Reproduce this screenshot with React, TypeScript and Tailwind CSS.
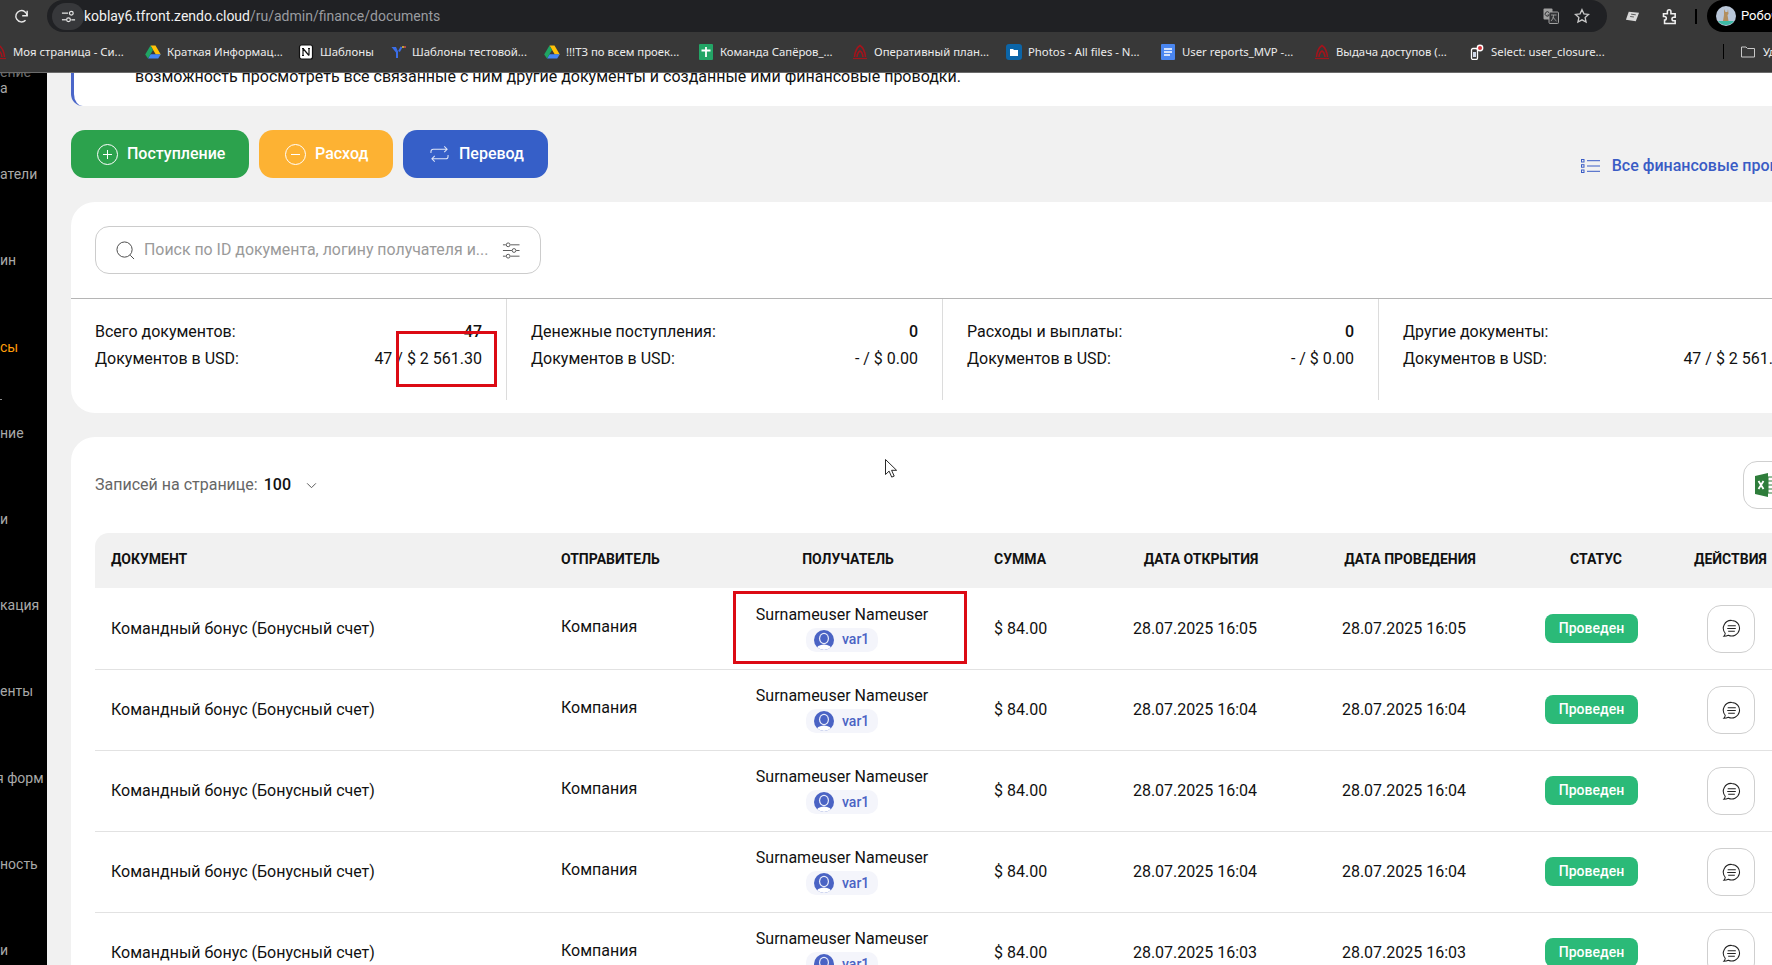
import React from "react";

const Drive = () => (
  <svg viewBox="0 0 16 16" className="h-4 w-4 shrink-0">
    <path d="M5.5 1.5h5l5.3 9h-5z" fill="#ffc107" />
    <path d="M3 14.5l2.6-4.3h10.2l-2.6 4.3z" fill="#4285f4" />
    <path d="M5.5 1.5L0.2 10.4 3 14.5 8 6z" fill="#1fa463" />
  </svg>
);
const Tower = () => (
  <svg viewBox="0 0 16 16" className="h-4 w-4 shrink-0" fill="none" stroke="#a3141c" strokeWidth="1.6">
    <path d="M2.5 13C3 7 5 3.5 8 1.5 11 3.5 13 7 13.5 13" />
    <path d="M5 13c.3-3 1.2-5 3-6 1.8 1 2.7 3 3 6" />
    <path d="M1 14.5h14" strokeWidth="1.2" />
  </svg>
);
const Notion = () => (
  <svg viewBox="0 0 16 16" className="h-4 w-4 shrink-0">
    <rect x="1.5" y="1" width="13" height="14" rx="2" fill="#fff" stroke="#111" strokeWidth="1.2" />
    <path d="M5 4.5v7M5 4.5l6 7M11 4.5v7M4 4.5h2M10 4.5h2M4 11.5h2" stroke="#111" strokeWidth="1.2" fill="none" />
  </svg>
);
const YIcon = () => (
  <svg viewBox="0 0 16 16" className="h-4 w-4 shrink-0">
    <path d="M1.5 3l4.5 5.5V14h2V7.5L6 3z" fill="#3b6ee8" />
    <path d="M9 7.5L11.5 3" stroke="#3b6ee8" strokeWidth="2" />
    <circle cx="13" cy="3" r="1" fill="#e8c43b" />
    <circle cx="15" cy="3" r="1" fill="#d94b4b" />
  </svg>
);
const Sheets = () => (
  <svg viewBox="0 0 16 16" className="h-4 w-4 shrink-0">
    <rect x="1" y="0" width="14" height="16" rx="1" fill="#23a566" />
    <path d="M3.5 6.5h9M8 3v10" stroke="#fff" strokeWidth="1.8" />
  </svg>
);
const Photos = () => (
  <svg viewBox="0 0 16 16" className="h-4 w-4 shrink-0">
    <rect x="0" y="0" width="16" height="16" rx="3" fill="#0b65a8" />
    <path d="M4 5h3l1 1h4v6H4z" fill="#fff" />
  </svg>
);
const Docs = () => (
  <svg viewBox="0 0 16 16" className="h-4 w-4 shrink-0">
    <rect x="1" y="0" width="14" height="16" rx="1" fill="#4a86f0" />
    <path d="M4 5h8M4 8h8M4 11h6" stroke="#fff" strokeWidth="1.5" />
  </svg>
);
const DbIcon = () => (
  <svg viewBox="0 0 16 16" className="h-4 w-4 shrink-0">
    <rect x="2.5" y="4.5" width="6" height="11" rx="1.5" fill="none" stroke="#fff" strokeWidth="1.3" />
    <rect x="4" y="8" width="3" height="5" fill="#cfd8e8" />
    <circle cx="11" cy="4" r="3.4" fill="#fff" />
    <circle cx="11" cy="4" r="2" fill="#d2343a" />
  </svg>
);

const bookmarks: { w: string; text: string; icon: React.ReactNode }[] = [
  { w: "w-[154px]", text: "Моя страница - Си...", icon: <Tower /> },
  { w: "w-[153px]", text: "Краткая Информац...", icon: <Drive /> },
  { w: "w-[92px]", text: "Шаблоны", icon: <Notion /> },
  { w: "w-[154px]", text: "Шаблоны тестовой...", icon: <YIcon /> },
  { w: "w-[154px]", text: "!!!ТЗ по всем проек...", icon: <Drive /> },
  { w: "w-[154px]", text: "Команда Сапёров_...", icon: <Sheets /> },
  { w: "w-[154px]", text: "Оперативный план...", icon: <Tower /> },
  { w: "w-[154px]", text: "Photos - All files - N...", icon: <Photos /> },
  { w: "w-[154px]", text: "User reports_MVP -...", icon: <Docs /> },
  { w: "w-[155px]", text: "Выдача доступов (...", icon: <Tower /> },
  { w: "w-[254px]", text: "Select: user_closure...", icon: <DbIcon /> },
];

const Chrome = () => (
  <div className="h-[73px] shrink-0 border-b border-[#6b6b6b] bg-[#383838] font-['Noto_Sans',sans-serif] text-white">
    <div className="flex h-8 items-center">
      <div className="flex w-[47px] justify-center pr-[5px]">
        <svg viewBox="0 0 24 24" className="h-[17px] w-[17px]" fill="none" stroke="#e8e8e8" strokeWidth="2">
          <path d="M20 11a8 8 0 1 0-2.3 6.3" />
          <path d="M20 4v7h-7" />
        </svg>
      </div>
      <div className="flex h-8 w-[1560px] items-center rounded-full bg-[#202124]">
        <div className="ml-[5px] flex h-[27px] w-[32px] items-center justify-center rounded-full bg-[#37383b]">
          <svg viewBox="0 0 16 16" className="h-[15px] w-[15px]" fill="none" stroke="#e6e6e6" strokeWidth="1.3">
            <path d="M1 4.5h6.5M11 11.5h4" />
            <circle cx="11" cy="4.5" r="2" />
            <path d="M1 11.5h4.5" />
            <circle cx="8" cy="11.5" r="2" />
          </svg>
        </div>
        <div className="whitespace-nowrap font-['Roboto',sans-serif] text-[14px]">
          <span className="text-[#f1f1f1]">koblay6.tfront.zendo.cloud</span>
          <span className="text-[#9a9ca0]">/ru/admin/finance/documents</span>
        </div>
        <div className="ml-auto mr-[17px] flex items-center gap-[15px]">
          <svg viewBox="0 0 16 16" className="h-4 w-4">
            <rect x="0.5" y="0.5" width="9" height="11" rx="1" fill="#a0a0a0" />
            <rect x="6" y="4" width="9.5" height="11.5" rx="1" fill="#303134" stroke="#a0a0a0" />
            <path d="M8 7h5.5M10.5 7c0 3-1.5 5-2.5 6M10 9c.7 1.5 2 3 3.5 4" stroke="#a0a0a0" fill="none" strokeWidth="0.9" />
            <path d="M6 4.5a2.2 2.2 0 1 0 .3 2.5H4.5" stroke="#303134" fill="none" />
          </svg>
          <svg viewBox="0 0 24 24" className="h-4 w-4" fill="none" stroke="#c8c8c8" strokeWidth="2">
            <path d="M12 2.5l2.9 6.3 6.9.8-5.1 4.7 1.4 6.8-6.1-3.4-6.1 3.4 1.4-6.8-5.1-4.7 6.9-.8z" />
          </svg>
        </div>
      </div>
      <svg viewBox="0 0 16 16" className="ml-[18px] h-[15px] w-[15px]">
        <path d="M4 3l11 1-3.5 9L1 11.5z" fill="#d8d8d8" />
        <path d="M6.5 5.5l5 .7M5.5 8l4 .5" stroke="#555" />
      </svg>
      <svg viewBox="0 0 24 24" className="ml-[21px] h-[17px] w-[17px]" fill="none" stroke="#efefef" strokeWidth="2.2">
        <path d="M3.5 8H9V5a2.5 2.5 0 0 1 5 0v3h6v5h-2a2.5 2.5 0 0 0 0 5h2v4H5v-5a2.5 2.5 0 0 0 0-5H3.5z" />
      </svg>
      <div className="ml-[17px] h-[15px] w-[2px] bg-black" />
      <div className="ml-[10px] flex h-8 flex-1 items-center overflow-hidden rounded-l-full bg-black pl-[9px]">
        <svg viewBox="0 0 20 20" className="h-5 w-5 shrink-0">
          <circle cx="10" cy="10" r="10" fill="#b9c6d8" />
          <path d="M2 15h16a10 10 0 0 1-16 0z" fill="#3db9a5" />
          <path d="M8 3l1.5 3h2L12 3l.5 5-1 1 1 6H7l1-6z" fill="#b38f5e" />
        </svg>
        <span className="ml-[5px] whitespace-nowrap font-['Roboto',sans-serif] text-[13px]">Робочий</span>
      </div>
    </div>
    <div className="-ml-[9px] flex h-10 items-center whitespace-nowrap text-[11.35px] text-[#ececec]">
      {bookmarks.map((b, i) => (
        <div key={i} className={`flex shrink-0 items-center gap-[6px] ${b.w}`}>
          {b.icon}
          <span>{b.text}</span>
        </div>
      ))}
      <div className="flex shrink-0 items-center">
        <div className="h-[15px] w-[1px] bg-black" />
        <svg viewBox="0 0 16 16" className="ml-[16px] h-4 w-4" fill="none" stroke="#c8c8c8">
          <path d="M1.5 3h4.5l1.5 1.5h7v8.5h-13z" />
        </svg>
        <span className="ml-[7px]">Удалённые</span>
      </div>
    </div>
  </div>
);

const sideItemCls = "flex h-[86.2px] items-center whitespace-nowrap";

const Sidebar = () => (
  <div className="w-[47px] shrink-0 overflow-hidden bg-black font-['Roboto',sans-serif] text-[14px] leading-4 text-[#a9a9a9]">
    <div className="-mt-[28px]">
      <div className="h-[86.2px] whitespace-nowrap pt-[19px]">
        <div className="text-[#6f6f6f]">ение</div>
        <div>а</div>
      </div>
      <div className={sideItemCls}>атели</div>
      <div className={sideItemCls}>ин</div>
      <div className={`${sideItemCls} text-[#ff9d0a]`}>сы</div>
      <div className="relative">
        <div className="absolute left-0 top-[9px] h-[1px] w-[2px] bg-[#8a8a8a]" />
      </div>
      <div className={sideItemCls}>ние</div>
      <div className={sideItemCls}>и</div>
      <div className={sideItemCls}>кация</div>
      <div className={sideItemCls}>енты</div>
      <div className={`${sideItemCls} -ml-[4px]`}>я форм</div>
      <div className={sideItemCls}>ность</div>
      <div className={sideItemCls}>и</div>
    </div>
  </div>
);

const CircleBtnIcon = ({ plus }: { plus?: boolean }) => (
  <svg viewBox="0 0 21 21" className="h-[21px] w-[21px] shrink-0" fill="none" stroke="#fff" strokeWidth="1">
    <circle cx="10.5" cy="10.5" r="10" />
    <path d="M6 10.5h9" />
    {plus && <path d="M10.5 6v9" />}
  </svg>
);

const Stat = ({
  a,
  av,
  bv,
  bold,
  last,
}: {
  a: string;
  av?: string;
  bv: string;
  bold?: boolean;
  last?: boolean;
}) => (
  <div className={`h-[101px] w-[436px] shrink-0 px-6 pt-[19px] leading-[27px] ${last ? "" : "border-r border-[#dcdcdc]"}`}>
    <div className="flex justify-between">
      <span>{a}</span>
      <span className={bold ? "font-medium" : ""}>{av}</span>
    </div>
    <div className="flex justify-between">
      <span>Документов в USD:</span>
      <span>{bv}</span>
    </div>
  </div>
);

const Avatar = () => (
  <svg viewBox="0 0 20 20" className="h-5 w-5 shrink-0">
    <defs>
      <clipPath id="av">
        <circle cx="10" cy="10" r="10" />
      </clipPath>
    </defs>
    <circle cx="10" cy="10" r="10" fill="#4a63c4" />
    <g clipPath="url(#av)">
      <ellipse cx="10" cy="20" rx="8" ry="5.5" fill="#fff" />
      <ellipse cx="10" cy="8.5" rx="5" ry="5.8" fill="#e9ecf9" />
      <ellipse cx="10" cy="8.5" rx="3.8" ry="4.6" fill="#4a63c4" />
    </g>
  </svg>
);

const rows = [
  "28.07.2025 16:05",
  "28.07.2025 16:04",
  "28.07.2025 16:04",
  "28.07.2025 16:04",
  "28.07.2025 16:03",
];

const headCls = "pb-[3px] text-[14px] font-bold uppercase";

const Table = () => (
  <table className="w-[1696px] table-fixed border-collapse">
    <colgroup>
      <col className="w-[450px]" />
      <col className="w-[189px]" />
      <col className="w-[228px]" />
      <col className="w-[155px]" />
      <col className="w-[168px]" />
      <col className="w-[250px]" />
      <col className="w-[122px]" />
      <col className="w-[134px]" />
    </colgroup>
    <thead>
      <tr className="h-[55px] bg-[#f1f1f1]">
        <th className={`${headCls} rounded-tl-[14px] pl-4 text-left`}>Документ</th>
        <th className={`${headCls} pl-4 text-left`}>Отправитель</th>
        <th className={`${headCls} text-center`}>Получатель</th>
        <th className={`${headCls} pl-8 text-left`}>Сумма</th>
        <th className={`${headCls} text-center`}>Дата открытия</th>
        <th className={`${headCls} text-center`}>Дата проведения</th>
        <th className={`${headCls} text-center`}>Статус</th>
        <th className={`${headCls} pl-[37px] text-left`}>Действия</th>
      </tr>
    </thead>
    <tbody>
      {rows.map((d, i) => (
        <tr key={i} className="h-[81px] border-b border-[#e2e2e2]">
          <td className="pl-4 pt-[1px]">Командный бонус (Бонусный счет)</td>
          <td className="pb-[3px] pl-4">Компания</td>
          <td className="pr-3 text-center">
            <div className="leading-5">Surnameuser Nameuser</div>
            <div className="mx-auto mt-[3px] flex h-6 w-[72px] items-center gap-2 rounded-[10px] bg-[#f4f5fb] pl-2 text-[14px] font-medium text-[#4a63c4]">
              <Avatar />
              var1
            </div>
          </td>
          <td className="pl-8 pt-[1px]">$ 84.00</td>
          <td className="pr-3 pt-[1px] text-center">{d}</td>
          <td className="pr-3 pt-[1px] text-center">{d}</td>
          <td>
            <div className="ml-[10px] flex h-[29px] w-[93px] items-center justify-center rounded-[8px] bg-[#2bba78] text-[14px] font-medium text-white">
              Проведен
            </div>
          </td>
          <td className="pt-[1px]">
            <div className="ml-[50px] flex h-12 w-12 items-center justify-center rounded-[14px] border border-[#cfcfcf]">
              <svg viewBox="0 0 20 20" className="h-[19px] w-[19px]" fill="none" stroke="#222" strokeWidth="1.1">
                <path d="M10.3 1.5a8.2 8.2 0 1 1-3.6 15.6c-1.5.8-3.1 1.1-4.8 1.1.9-1 1.4-2 1.5-3.2A8.2 8.2 0 0 1 10.3 1.5z" />
                <path d="M6 7h8.5M5.5 10h9M6.5 13h7" />
              </svg>
            </div>
          </td>
        </tr>
      ))}
    </tbody>
  </table>
);

export default function App() {
  return (
    <div className="relative flex h-[965px] w-[1772px] flex-col overflow-hidden bg-[#f1f1f1] font-['Roboto',sans-serif] text-[16px] text-[#111]">
      <Chrome />
      <div className="flex min-h-0 flex-1">
        <Sidebar />
        <div className="min-w-0 flex-1 overflow-hidden pl-6">
          <div className="w-[1744px]">
            <div className="h-[33px] overflow-hidden rounded-bl-[12px] border-l-[3px] border-[#4a66c9] bg-white pl-[61px]">
              <div className="-mt-[8px] leading-6">
                возможность просмотреть все связанные с ним другие документы и созданные ими финансовые проводки.
              </div>
            </div>

            <div className="mt-6 flex items-end justify-between">
              <div className="flex gap-[10px] font-medium text-white">
                <button className="flex h-12 w-[178px] items-center gap-[9px] rounded-[14px] bg-[#2ca24d] pl-[26px]">
                  <CircleBtnIcon plus />
                  Поступление
                </button>
                <button className="flex h-12 w-[134px] items-center gap-[9px] rounded-[14px] bg-[#fdb233] pl-[26px]">
                  <CircleBtnIcon />
                  Расход
                </button>
                <button className="flex h-12 w-[145px] items-center gap-[10px] rounded-[14px] bg-[#365fc8] pl-[27px]">
                  <svg viewBox="0 0 20 18" className="h-[18px] w-[19px] shrink-0" fill="none" stroke="#dfe6f7" strokeWidth="1.1">
                    <path d="M1 8V6.5A2.5 2.5 0 0 1 3.5 4H18M15 1l3 3-3 3" />
                    <path d="M19 10v1.5a2.5 2.5 0 0 1-2.5 2.5H2M5 17l-3-3 3-3" />
                  </svg>
                  Перевод
                </button>
              </div>
              <div className="flex h-6 items-center gap-[12px] font-medium text-[#3a5cc5]">
                <svg viewBox="0 0 19 14" className="h-[14px] w-[19px]" fill="none" stroke="#3a5cc5" strokeWidth="1">
                  <rect x="0.5" y="0.5" width="2.5" height="2.5" />
                  <rect x="0.5" y="5.7" width="2.5" height="2.5" />
                  <rect x="0.5" y="11" width="2.5" height="2.5" />
                  <path d="M6 1.7h13M6 7h13M6 12.3h13" />
                </svg>
                Все финансовые проводки
              </div>
            </div>

            <div className="mt-6 rounded-l-[24px] bg-white">
              <div className="border-b border-[#b5b5b5] p-6">
                <div className="flex h-12 w-[446px] items-center rounded-[14px] border border-[#cccccc] pl-5 pr-5">
                  <svg viewBox="0 0 20 20" className="h-[19px] w-[19px] shrink-0" fill="none" stroke="#444" strokeWidth="1">
                    <circle cx="9" cy="9" r="8" />
                    <path d="M15 15l4 4" />
                  </svg>
                  <span className="ml-[9px] flex-1 whitespace-nowrap text-[15.9px] text-[#9a9a9a]">Поиск по ID документа, логину получателя и...</span>
                  <svg viewBox="0 0 19 17" className="h-[17px] w-[18px] shrink-0" fill="none" stroke="#555" strokeWidth="1">
                    <path d="M1 2.5h3M9 2.5h9.5M1 8.5h9.5M15 8.5h3.5M1 14.5h3M9 14.5h9.5" />
                    <circle cx="6.5" cy="2.5" r="2" />
                    <circle cx="12.7" cy="8.5" r="2" />
                    <circle cx="6.5" cy="14.5" r="2" />
                  </svg>
                </div>
              </div>
              <div className="flex h-[114px] items-start">
                <Stat a="Всего документов:" av="47" bv="47 / $ 2 561.30" bold />
                <Stat a="Денежные поступления:" av="0" bv="- / $ 0.00" bold />
                <Stat a="Расходы и выплаты:" av="0" bv="- / $ 0.00" bold />
                <Stat a="Другие документы:" av="" bv="47 / $ 2 561.30" last />
              </div>
            </div>

            <div className="mt-6 rounded-l-[24px] bg-white px-6 pt-6">
              <div className="mb-6 flex h-12 items-center justify-between">
                <div className="flex items-center">
                  <span className="text-[#666]">Записей на странице:</span>
                  <span className="ml-[6px] font-medium">100</span>
                  <svg viewBox="0 0 12 8" className="ml-[15px] h-[7px] w-[11px]" fill="none" stroke="#555" strokeWidth="1.1">
                    <path d="M1 1.5l5 5 5-5" />
                  </svg>
                </div>
                <div className="flex h-12 w-12 items-center justify-center rounded-[14px] border border-[#cfcfcf]">
                  <svg viewBox="0 0 26 24" className="h-6 w-[26px]">
                    <path d="M1 3l13-3v24L1 21z" fill="#2e7d3b" />
                    <path d="M14 4h11v16H14z" fill="#fff" stroke="#2e7d3b" />
                    <path d="M14 8h11M14 12h11M14 16h11M19 4v16" stroke="#2e7d3b" />
                    <path d="M4.5 8l5 8M9.5 8l-5 8" stroke="#fff" strokeWidth="1.8" />
                  </svg>
                </div>
              </div>
              <Table />
            </div>
          </div>
        </div>
      </div>

      <div className="absolute left-[396px] top-[331px] h-[56px] w-[101px] border-[3px] border-[#dc0a14]" />
      <div className="absolute left-[733px] top-[591px] h-[73px] w-[234px] border-[3px] border-[#dc0a14]" />
      <svg viewBox="0 0 12 19" className="absolute left-[885px] top-[459px] h-[19px] w-[12px]">
        <path d="M0.5 0.5v15l3.6-3.4 2.6 6 2.5-1-2.6-5.8h5z" fill="#fff" stroke="#111" strokeWidth="0.9" />
      </svg>
    </div>
  );
}
